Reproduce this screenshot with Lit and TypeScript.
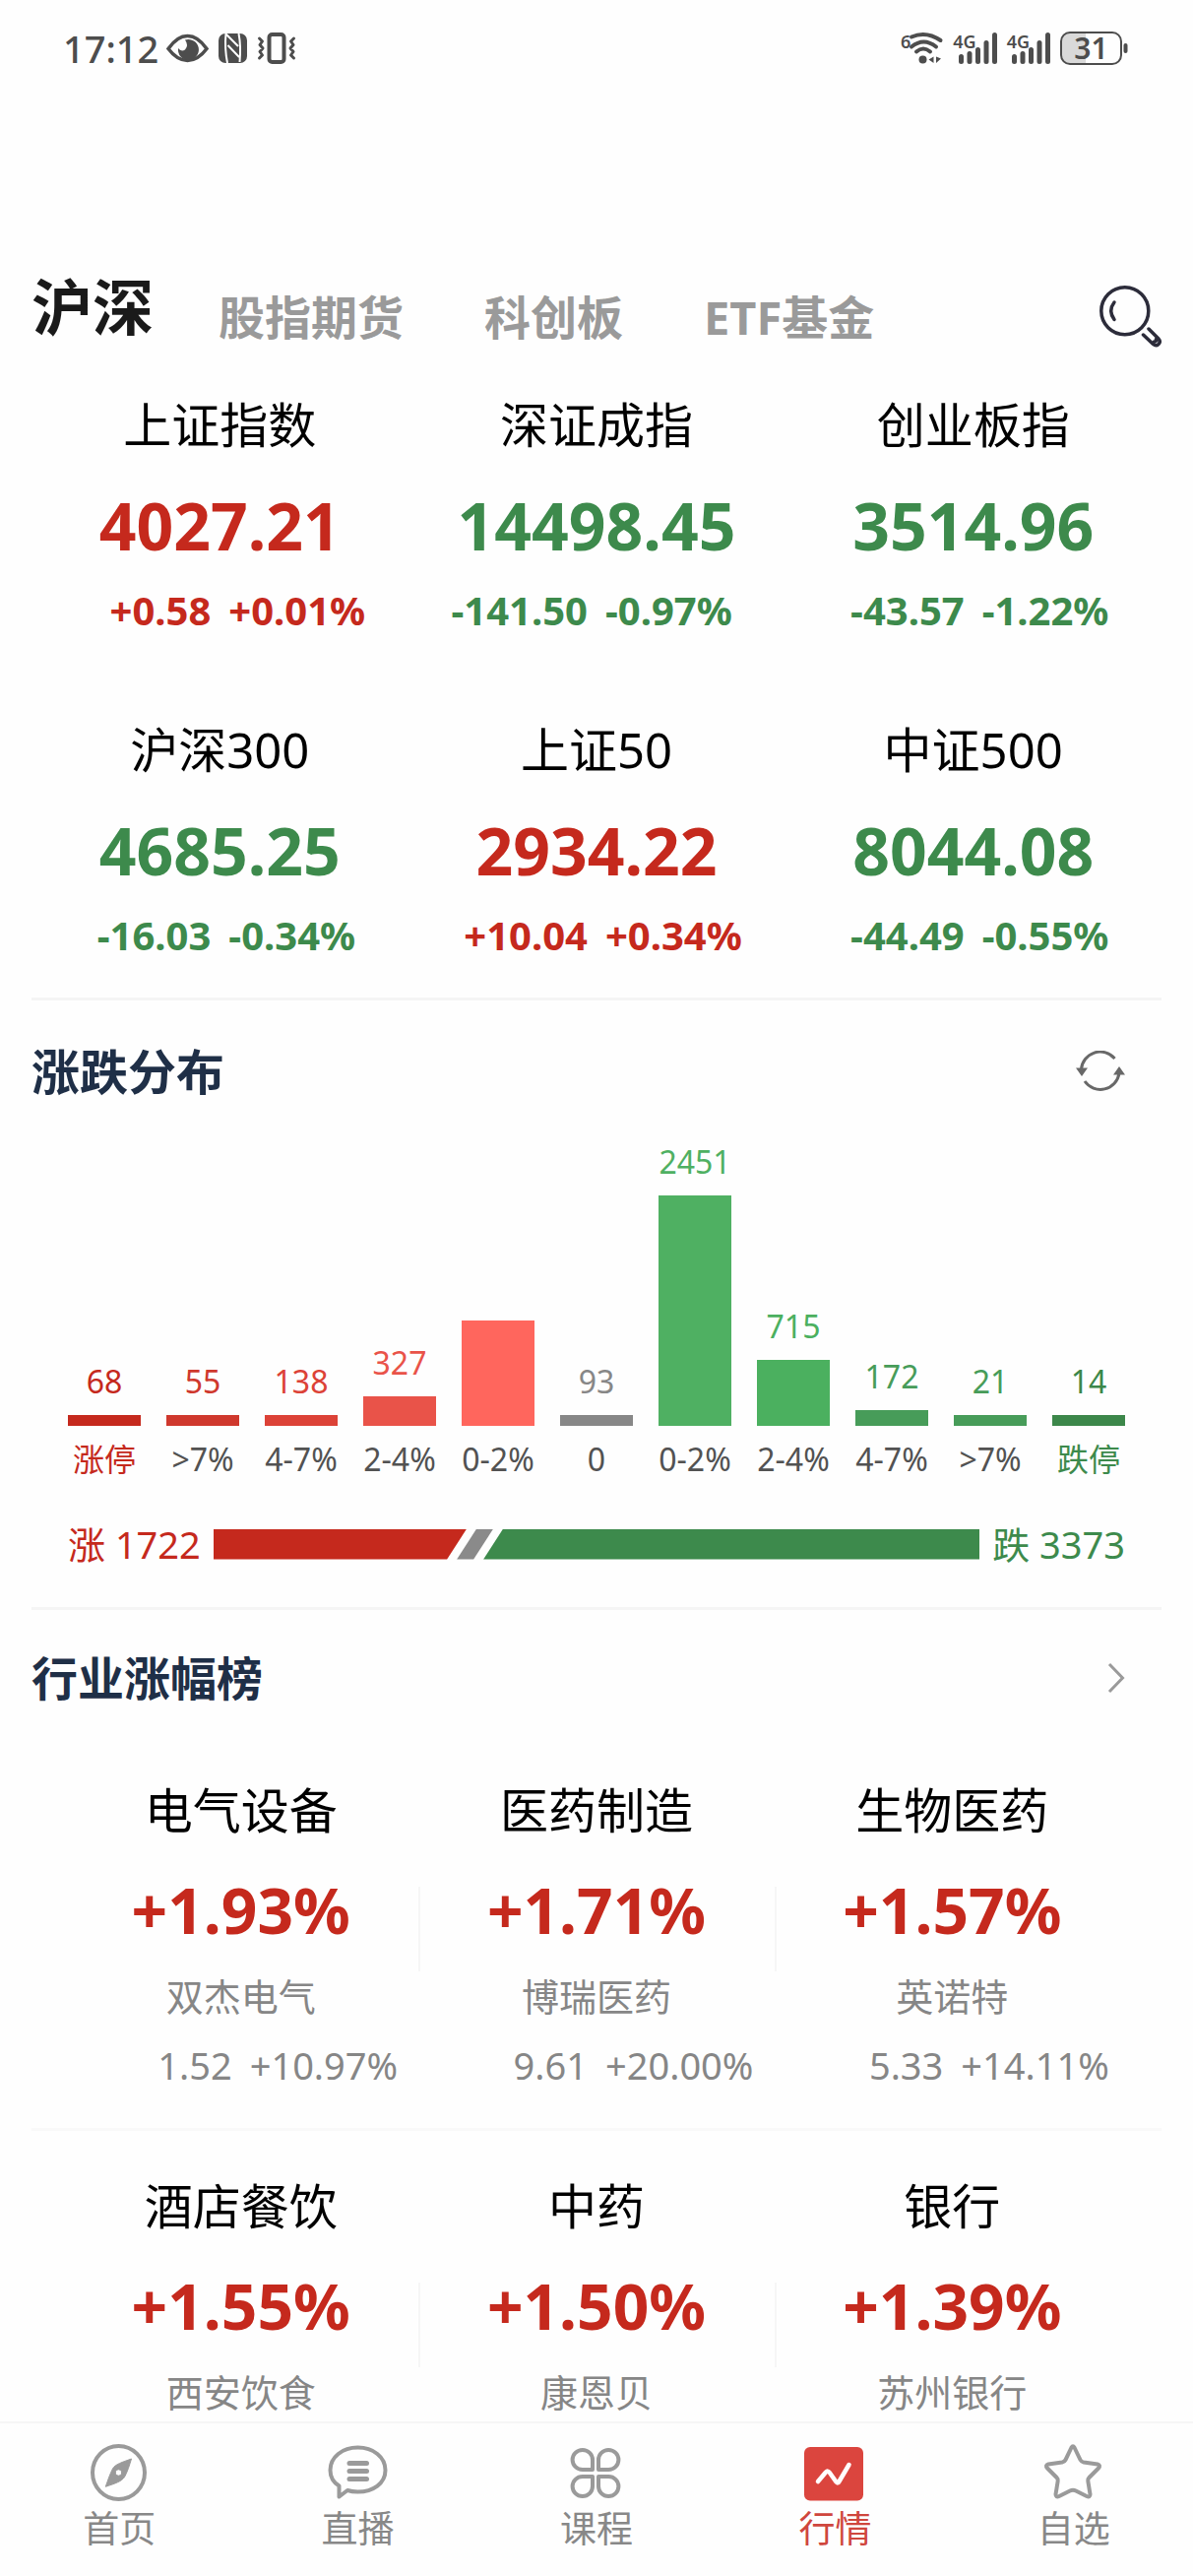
import { LitElement, html, css, svg } from "lit";
import { customElement, property, state } from "lit/decorators.js";
import { classMap } from "lit/directives/class-map.js";
import { styleMap } from "lit/directives/style-map.js";

type Trend = "up" | "down";

interface IndexQuote {
  name: string;
  value: string;
  diff: string;
  rate: string;
  trend: Trend;
}

interface Bucket {
  label: string;
  count: string;
  height: number;
  color: string;
  edge?: string;
}

interface Industry {
  name: string;
  rate: string;
  stock: string;
  diff?: string;
  stockRate?: string;
}

const TABS = ["沪深", "股指期货", "科创板", "ETF基金"];

const INDICES: IndexQuote[] = [
  { name: "上证指数", value: "4027.21", diff: "+0.58", rate: "+0.01%", trend: "up" },
  { name: "深证成指", value: "14498.45", diff: "-141.50", rate: "-0.97%", trend: "down" },
  { name: "创业板指", value: "3514.96", diff: "-43.57", rate: "-1.22%", trend: "down" },
  { name: "沪深300", value: "4685.25", diff: "-16.03", rate: "-0.34%", trend: "down" },
  { name: "上证50", value: "2934.22", diff: "+10.04", rate: "+0.34%", trend: "up" },
  { name: "中证500", value: "8044.08", diff: "-44.49", rate: "-0.55%", trend: "down" },
];

const BUCKETS: Bucket[] = [
  { label: "涨停", count: "68", height: 11, color: "#c5291d", edge: "up" },
  { label: ">7%", count: "55", height: 11, color: "#cf382d" },
  { label: "4-7%", count: "138", height: 11, color: "#dc4237" },
  { label: "2-4%", count: "327", height: 30, color: "#e95349" },
  { label: "0-2%", count: "", height: 107, color: "#ff665d" },
  { label: "0", count: "93", height: 11, color: "#878787" },
  { label: "0-2%", count: "2451", height: 234, color: "#4fb062" },
  { label: "2-4%", count: "715", height: 67, color: "#4bb05f" },
  { label: "4-7%", count: "172", height: 16, color: "#479c59" },
  { label: ">7%", count: "21", height: 11, color: "#479c59" },
  { label: "跌停", count: "14", height: 11, color: "#3c874a", edge: "down" },
];

const INDUSTRIES: Industry[][] = [
  [
    { name: "电气设备", rate: "+1.93%", stock: "双杰电气", diff: "1.52", stockRate: "+10.97%" },
    { name: "医药制造", rate: "+1.71%", stock: "博瑞医药", diff: "9.61", stockRate: "+20.00%" },
    { name: "生物医药", rate: "+1.57%", stock: "英诺特", diff: "5.33", stockRate: "+14.11%" },
  ],
  [
    { name: "酒店餐饮", rate: "+1.55%", stock: "西安饮食" },
    { name: "中药", rate: "+1.50%", stock: "康恩贝" },
    { name: "银行", rate: "+1.39%", stock: "苏州银行" },
  ],
];

const petal = "M28 28 V18 A10.2 10 0 0 0 7.6 18 A10.2 10 0 0 0 18 28 Z";

const NAV = [
  {
    label: "首页",
    icon: svg`<ellipse cx="31.5" cy="31" rx="26.5" ry="27" fill="none" stroke="#9a9a9a" stroke-width="4"/>
      <path d="M44.5 17 C35 20.5 28 22.5 25.5 27 C22.5 33 20.5 39 18.3 45.3 C28 42 34.5 40 37.5 35.5 C40.5 30 42.5 23.5 44.5 17 Z M31.5 27.8 A3.2 3.2 0 1 1 31.4 27.8 Z" fill="#9a9a9a" fill-rule="evenodd" stroke="#9a9a9a" stroke-width="1" stroke-linejoin="round"/>`,
  },
  {
    label: "直播",
    icon: svg`<path d="M12.5 44.5 C6 40.5 3.5 34.5 3.5 28.5 C3.5 15 16 5.5 31.5 5.5 S59.5 15 59.5 28.5 S47 50.5 31.5 50.5 Q25.5 50.5 21 49 L12.5 55.5 Z" fill="none" stroke="#9a9a9a" stroke-width="4" stroke-linejoin="round"/>
      <path d="M23 21.5 H40.5 M23 29.5 H40.5 M23 37.5 H40.5" stroke="#9a9a9a" stroke-width="5" stroke-linecap="round"/>`,
  },
  {
    label: "课程",
    icon: svg`<g fill="none" stroke="#9a9a9a" stroke-width="4" stroke-linejoin="round">
      <path d=${petal}/>
      <path d=${petal} transform="matrix(-1 0 0 1 62 0)"/>
      <path d=${petal} transform="matrix(1 0 0 -1 0 63)"/>
      <path d=${petal} transform="matrix(-1 0 0 -1 62 63)"/></g>`,
  },
  {
    label: "行情",
    icon: svg`<rect x="1" y="5" width="60" height="54.5" rx="6" fill="#db453e"/>
      <path d="M15 40 L23 30.5 Q25 28.5 26.8 31 L33.5 40.5 Q35 42.5 36.5 40 L46.5 23" fill="none" stroke="#fff" stroke-width="4.5" stroke-linecap="round" stroke-linejoin="round"/>`,
  },
  {
    label: "自选",
    icon: svg`<path d="M29.5 5.5 Q31 3 32.5 5.5 L38.5 18 Q39.5 20 42 20.5 L56 22.5 Q59.5 23.5 57 26.5 L47.5 36 Q46 37.5 46.3 39.5 L48.5 53 Q48.5 56.5 45 55 L34 49.5 Q31 48 28 49.5 L17 55 Q13.5 56.5 13.5 53 L15.7 39.5 Q16 37.5 14.5 36 L5 26.5 Q2.5 23.5 6 22.5 L20 20.5 Q22.5 20 23.5 18 Z" fill="none" stroke="#9a9a9a" stroke-width="4" stroke-linejoin="round"/>`,
  },
];

const FONT = css`"Noto Sans", "Noto Sans CJK SC", sans-serif`;

@customElement("status-bar")
class StatusBar extends LitElement {
  static styles = css`
    :host {
      display: flex;
      align-items: center;
      height: 98px;
      padding: 0 66px 0 64px;
      box-sizing: border-box;
      color: #4d4d4d;
      font-family: ${FONT};
    }
    svg {
      display: block;
      flex: none;
      overflow: visible;
    }
    .time {
      font-size: 38px;
      line-height: 48px;
      font-weight: 500;
      margin-right: 8px;
    }
    .left {
      display: flex;
      align-items: center;
      gap: 10px;
    }
    .right {
      display: flex;
      align-items: center;
      gap: 10px;
      margin-left: auto;
    }
    .cell {
      display: flex;
      align-items: flex-start;
    }
    .net {
      font-size: 18px;
      line-height: 20px;
      font-weight: 600;
    }
    .bars {
      margin-left: -18px;
    }
    .wifi {
      margin-left: -2px;
    }
    .battery {
      display: grid;
      align-items: center;
      justify-items: center;
    }
    .battery > * {
      grid-area: 1 / 1;
    }
    .level {
      padding-right: 6px;
      font-size: 30px;
      line-height: 36px;
      font-weight: 600;
    }
  `;

  private signal() {
    return html`<div class="cell">
      <span class="net">4G</span>
      <svg class="bars" width="39" height="34" viewBox="0 0 39 34" fill="currentColor">
        <rect x="0" y="23" width="5" height="10" rx="2.5" />
        <rect x="8.5" y="20" width="5" height="13" rx="2.5" />
        <rect x="17" y="16" width="5" height="17" rx="2.5" />
        <rect x="25.5" y="9" width="5" height="24" rx="2.5" />
        <rect x="34" y="1" width="5" height="32" rx="2.5" />
      </svg>
    </div>`;
  }

  render() {
    return html`
      <span class="time">17:12</span>
      <div class="left">
        <svg width="43" height="34" viewBox="0 0 43 34">
          <path d="M2 17.5 Q11 4.5 21.5 4.5 T41 17.5 Q32 29.5 21.5 29.5 T2 17.5 Z" fill="none" stroke="currentColor" stroke-width="3.5" />
          <path d="M19 8.5 A10.5 10.5 0 1 1 12 17 Q15 21 19 18.5 Q23 14 19 8.5 Z" fill="currentColor" />
        </svg>
        <svg width="29" height="34" viewBox="0 0 29 34">
          <rect x="0" y="2" width="29" height="30" rx="7" fill="currentColor" />
          <path d="M7.5 2 Q6 17 9 32 M8 3 L20 15 M9.5 14 L21 26 M20.5 2 Q23 15 21.5 31" fill="none" stroke="#fefefe" stroke-width="2" />
        </svg>
        <svg width="40" height="34" viewBox="0 0 40 34" fill="none" stroke="currentColor">
          <rect x="12.5" y="3" width="15" height="28" rx="3" stroke-width="4" />
          <path d="M2.500 7 L5.500 10 L3 13.500 L6 17 L3 20.500 L5.500 24 L2.500 27 M37.500 7 L34.500 10 L37 13.500 L34 17 L37 20.500 L34.500 24 L37.500 27" stroke-width="3" stroke-linecap="round" stroke-linejoin="round" />
        </svg>
      </div>
      <div class="right">
        <div class="cell">
          <span class="net">6</span>
          <svg class="wifi" width="35" height="34" viewBox="0 0 35 34">
            <g fill="none" stroke="currentColor" stroke-width="4" stroke-linecap="round">
              <path d="M3 5.500 Q18 -1 32.500 9" />
              <path d="M3 15.500 Q15.500 5.500 28 15.500" />
              <path d="M8 20.500 Q15 14.500 22 20.500" />
            </g>
            <circle cx="14.500" cy="28.500" r="4" fill="currentColor" />
            <path d="M25.500 25.500 V32 L20.500 28.500 Z M28 25.500 V32 L33 27.500 Z" fill="currentColor" />
          </svg>
        </div>
        ${this.signal()} ${this.signal()}
        <div class="battery">
          <svg width="69" height="36" viewBox="0 0 69 36">
            <path d="M10 2 H26 V34 H10 Q2 34 2 26 V10 Q2 2 10 2 Z" fill="#d9d9d9" />
            <rect x="1" y="2" width="61" height="32" rx="9" fill="none" stroke="currentColor" stroke-width="2" />
            <rect x="64.500" y="13" width="4" height="10" rx="2" fill="currentColor" />
          </svg>
          <span class="level">31</span>
        </div>
      </div>
    `;
  }
}

@customElement("index-card")
class IndexCard extends LitElement {
  @property({ attribute: false }) quote!: IndexQuote;

  static styles = css`
    :host {
      display: block;
      text-align: center;
      font-family: ${FONT};
    }
    .name {
      font-size: 49px;
      line-height: 60px;
      color: #000;
    }
    .value {
      margin-top: 36px;
      font-size: 66px;
      line-height: 72px;
      font-weight: 700;
    }
    .change {
      display: grid;
      grid-template-columns: 1fr 1fr;
      gap: 18px;
      margin-top: 27px;
      font-size: 40px;
      line-height: 48px;
      font-weight: 700;
    }
    .diff {
      text-align: end;
    }
    .rate {
      text-align: start;
    }
    .up {
      color: #c5291d;
    }
    .down {
      color: #3d8a4c;
    }
  `;

  render() {
    const q = this.quote;
    return html`
      <div class="name">${q.name}</div>
      <div class=${q.trend}>
        <div class="value">${q.value}</div>
        <div class="change">
          <span class="diff">${q.diff}</span><span class="rate">${q.rate}</span>
        </div>
      </div>
    `;
  }
}

@customElement("rise-fall-chart")
class RiseFallChart extends LitElement {
  static styles = css`
    :host {
      display: block;
      padding: 40px 37px;
      font-family: ${FONT};
    }
    .bars {
      display: grid;
      grid-template-columns: repeat(11, minmax(0, 1fr));
      column-gap: 26px;
      align-items: end;
    }
    .bucket {
      display: flex;
      flex-direction: column;
      align-items: center;
      white-space: nowrap;
    }
    .count {
      font-size: 32px;
      line-height: 40px;
      margin-bottom: 14px;
    }
    .bar {
      align-self: stretch;
    }
    .label {
      margin-top: 14px;
      font-size: 32px;
      line-height: 40px;
      color: #525252;
    }
    .up {
      color: #c5291d;
    }
    .down {
      color: #3d8a4c;
    }
    .total {
      display: flex;
      align-items: center;
      gap: 13px;
      margin-top: 42px;
      font-size: 38px;
      line-height: 48px;
      white-space: nowrap;
    }
    .ratio {
      display: flex;
      flex: 1;
      height: 31px;
    }
    .rise {
      flex: 1722;
      background: #c5291d;
      clip-path: polygon(0 0, 100% 0, calc(100% - 20px) 100%, 0 100%);
    }
    .flat {
      width: 37px;
      margin: 0 -10px;
      background: #8a8a8a;
      clip-path: polygon(20px 0, 100% 0, calc(100% - 20px) 100%, 0 100%);
    }
    .fall {
      flex: 3373;
      background: #3d8a4c;
      clip-path: polygon(20px 0, 100% 0, 100% 100%, 0 100%);
    }
  `;

  render() {
    return html`
      <div class="bars">
        ${BUCKETS.map(
          (b) => html`<div class="bucket">
            <span class="count" style=${styleMap({ color: b.color })}>${b.count}</span>
            <div class="bar" style=${styleMap({ height: `${b.height}px`, background: b.color })}></div>
            <span class=${classMap({ label: true, up: b.edge === "up", down: b.edge === "down" })}>${b.label}</span>
          </div>`
        )}
      </div>
      <div class="total">
        <span class="up">涨 1722</span>
        <div class="ratio">
          <div class="rise"></div>
          <div class="flat"></div>
          <div class="fall"></div>
        </div>
        <span class="down">跌 3373</span>
      </div>
    `;
  }
}

@customElement("industry-card")
class IndustryCard extends LitElement {
  @property({ attribute: false }) item!: Industry;

  static styles = css`
    :host {
      display: block;
      text-align: center;
      font-family: ${FONT};
    }
    .name {
      font-size: 49px;
      line-height: 60px;
      color: #000;
    }
    .rate {
      margin-top: 36px;
      font-size: 64px;
      line-height: 72px;
      font-weight: 700;
      color: #c5291d;
    }
    .stock {
      margin-top: 27px;
      font-size: 38px;
      line-height: 48px;
      color: #868686;
    }
    .change {
      display: grid;
      grid-template-columns: 1fr 1fr;
      gap: 18px;
      margin-top: 22px;
      font-size: 38px;
      line-height: 48px;
      color: #868686;
    }
    .diff {
      text-align: end;
    }
    .stock-rate {
      text-align: start;
    }
  `;

  render() {
    const i = this.item;
    return html`
      <div class="name">${i.name}</div>
      <div class="rate">${i.rate}</div>
      <div class="stock">${i.stock}</div>
      ${i.diff
        ? html`<div class="change"><span class="diff">${i.diff}</span><span class="stock-rate">${i.stockRate}</span></div>`
        : null}
    `;
  }
}

@customElement("app-root")
class AppRoot extends LitElement {
  @state() private tab = 0;
  @state() private page = 3;

  static styles = css`
    :host {
      display: flex;
      flex-direction: column;
      min-height: 100vh;
      background: #fefefe;
      font-family: ${FONT};
    }
    svg {
      display: block;
    }
    button {
      padding: 0;
      border: 0;
      background: none;
      font-family: inherit;
      cursor: pointer;
    }
    .main {
      flex: 1;
      padding: 176px 32px 5px;
    }
    .top {
      display: flex;
      align-items: flex-end;
      justify-content: space-between;
    }
    .tabs {
      display: flex;
      align-items: flex-end;
      gap: 82px;
      padding-bottom: 3px;
    }
    .tab {
      font-size: 47px;
      line-height: 56px;
      font-weight: 700;
      color: #9a9a9a;
      white-space: nowrap;
    }
    .tab.active {
      margin-right: -16px;
      font-size: 62px;
      line-height: 76px;
      color: #1a1a1a;
    }
    .indices {
      display: grid;
      grid-template-columns: repeat(3, 1fr);
      row-gap: 87px;
      margin-top: 48px;
      padding-bottom: 39px;
    }
    .section {
      border-top: 3px solid #f5f5f5;
    }
    .head {
      display: flex;
      align-items: center;
      justify-content: space-between;
      padding: 40px 37px 0 0;
    }
    .title {
      margin: 0;
      font-size: 49px;
      line-height: 64px;
      font-weight: 700;
      color: #1f2f47;
    }
    .section + .section .head {
      padding-top: 37px;
    }
    .title.small {
      font-size: 47px;
    }
    .industries {
      display: grid;
      grid-template-columns: repeat(3, 1fr);
      padding: 46px 32px 40px;
    }
    .industries.first {
      padding-top: 72px;
    }
    .industries.last {
      padding-bottom: 0;
      border-top: 3px solid #f9f9f9;
    }
    .cell + .cell {
      background: linear-gradient(#f6f6f6, #f6f6f6) no-repeat left 108px / 2px 86px;
    }
    .nav {
      display: grid;
      grid-template-columns: repeat(5, 1fr);
      border-top: 2px solid #f6f6f6;
      padding: 19px 0 24px;
    }
    .link {
      display: flex;
      flex-direction: column;
      align-items: center;
      font-size: 37px;
      line-height: 48px;
      color: #888;
      text-decoration: none;
    }
    .link.active {
      color: #cf463d;
    }
  `;

  render() {
    return html`
      <status-bar></status-bar>
      <main class="main">
        <div class="top">
          <div class="tabs" role="tablist">
            ${TABS.map(
              (t, i) => html`<button
                role="tab"
                aria-selected=${i === this.tab}
                class=${classMap({ tab: true, active: i === this.tab })}
                @click=${() => (this.tab = i)}
              >${t}</button>`
            )}
          </div>
          <button aria-label="搜索">
            <svg width="63" height="63" viewBox="0 0 63 63" fill="none" stroke="#2c2c3a" stroke-width="3.5" stroke-linecap="round" stroke-linejoin="round">
              <circle cx="25.8" cy="25.8" r="24" />
              <path d="M15 17 Q8.500 25.500 15 34.500" />
              <path d="M50 44 L60 54 Q62.500 57 60 59.500 Q57.500 62 54.500 59.500 L44.500 50 M57.500 54.500 Q58 57 55.500 57" />
            </svg>
          </button>
        </div>

        <div class="indices">
          ${INDICES.map((q) => html`<index-card .quote=${q}></index-card>`)}
        </div>

        <section class="section">
          <div class="head">
            <h2 class="title">涨跌分布</h2>
            <button aria-label="刷新">
              <svg width="50" height="42" viewBox="0 0 50 42">
                <path d="M5.5 19 A19.3 19.3 0 0 1 39.5 8 M44 23 A19.3 19.3 0 0 1 9 31" fill="none" stroke="#686868" stroke-width="3" />
                <path d="M0 17.5 H12 L6 26 Z M38 24.5 H50 L44 16 Z" fill="#686868" />
              </svg>
            </button>
          </div>
          <rise-fall-chart></rise-fall-chart>
        </section>

        <section class="section">
          <div class="head">
            <h2 class="title small">行业涨幅榜</h2>
            <button aria-label="更多">
              <svg width="18" height="32" viewBox="0 0 18 32">
                <path d="M2 2 L15.5 16 L2 30" fill="none" stroke="#9a9a9a" stroke-width="3" />
              </svg>
            </button>
          </div>
          ${INDUSTRIES.map(
            (row, r) => html`<div class=${classMap({ industries: true, first: r === 0, last: r > 0 })}>
              ${row.map((i) => html`<industry-card class="cell" .item=${i}></industry-card>`)}
            </div>`
          )}
        </section>
      </main>
      <nav class="nav">
        ${NAV.map(
          (n, i) => html`<a
            href="#"
            class=${classMap({ link: true, active: i === this.page })}
            @click=${(e: Event) => {
              e.preventDefault();
              this.page = i;
            }}
          >
            <svg width="64" height="64" viewBox="0 0 64 64">${n.icon}</svg>
            <span>${n.label}</span>
          </a>`
        )}
      </nav>
    `;
  }
}
